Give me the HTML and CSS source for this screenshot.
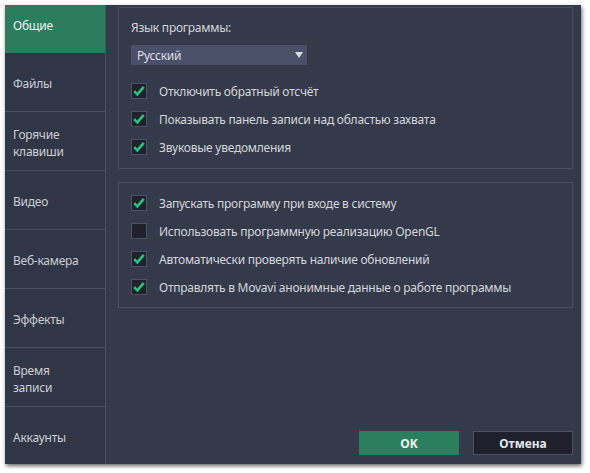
FILE: index.html
```html
<!DOCTYPE html>
<html lang="ru">
<head>
<meta charset="utf-8">
<title>Настройки</title>
<link rel="stylesheet" href="styles.css">
</head>
<body>
<div class="window">
  <nav class="sidebar">
    <div class="nav-item nav-first active">Общие</div>
    <div class="nav-item">Файлы</div>
    <div class="nav-item">Горячие<br>клавиши</div>
    <div class="nav-item">Видео</div>
    <div class="nav-item">Веб-камера</div>
    <div class="nav-item">Эффекты</div>
    <div class="nav-item">Время<br>записи</div>
    <div class="nav-item nav-last">Аккаунты</div>
  </nav>
  <main class="main">
    <section class="group group-lang">
      <div class="label">Язык программы:</div>
      <div class="select">
        <span>Русский</span>
        <svg class="arrow" width="8" height="6" viewBox="0 0 8 6"><path d="M0 0H8L4 6Z" fill="#d9dbe2"/></svg>
      </div>
      <div class="checks">
        <div class="row"><span class="cb checked"><svg viewBox="0 0 16 16" width="16" height="16"><path d="M3.2 8.2L6.3 11.3L12.8 3.8" fill="none" stroke="#27c27b" stroke-width="2.6"/></svg></span><span>Отключить обратный отсчёт</span></div>
        <div class="row"><span class="cb checked"><svg viewBox="0 0 16 16" width="16" height="16"><path d="M3.2 8.2L6.3 11.3L12.8 3.8" fill="none" stroke="#27c27b" stroke-width="2.6"/></svg></span><span>Показывать панель записи над областью захвата</span></div>
        <div class="row"><span class="cb checked"><svg viewBox="0 0 16 16" width="16" height="16"><path d="M3.2 8.2L6.3 11.3L12.8 3.8" fill="none" stroke="#27c27b" stroke-width="2.6"/></svg></span><span>Звуковые уведомления</span></div>
      </div>
    </section>
    <section class="group group-sys">
      <div class="row"><span class="cb checked"><svg viewBox="0 0 16 16" width="16" height="16"><path d="M3.2 8.2L6.3 11.3L12.8 3.8" fill="none" stroke="#27c27b" stroke-width="2.6"/></svg></span><span>Запускать программу при входе в систему</span></div>
      <div class="row"><span class="cb"></span><span>Использовать программную реализацию OpenGL</span></div>
      <div class="row"><span class="cb checked"><svg viewBox="0 0 16 16" width="16" height="16"><path d="M3.2 8.2L6.3 11.3L12.8 3.8" fill="none" stroke="#27c27b" stroke-width="2.6"/></svg></span><span>Автоматически проверять наличие обновлений</span></div>
      <div class="row"><span class="cb checked"><svg viewBox="0 0 16 16" width="16" height="16"><path d="M3.2 8.2L6.3 11.3L12.8 3.8" fill="none" stroke="#27c27b" stroke-width="2.6"/></svg></span><span>Отправлять в Movavi анонимные данные о работе программы</span></div>
    </section>
    <div class="buttons">
      <button class="btn btn-ok">OK</button>
      <button class="btn btn-cancel">Отмена</button>
    </div>
  </main>
</div>
</body>
</html>
```
FILE: styles.css
```css
html, body {
  margin: 0;
  padding: 0;
  background: #ffffff;
}
body {
  font-family: "Noto Sans", "Open Sans", sans-serif;
  font-size: 12px;
  letter-spacing: -0.25px;
  color: #d3d5dc;
}
.window {
  margin: 5px;
  width: 576px;
  height: 459px;
  display: flex;
  background: #353a4a;
  box-shadow: 1px 2px 4px rgba(0, 0, 0, 0.6);
}
.sidebar {
  width: 100px;
  border-right: 1px solid #4a5062;
  background: #313646;
  display: flex;
  flex-direction: column;
}
.nav-item {
  border-bottom: 1px solid #4a5062;
  display: flex;
  align-items: center;
  padding: 5px 0 0 8px;
  box-sizing: border-box;
  height: 59px;
  line-height: 16.5px;
  color: #cbcdd4;
}
.nav-first {
  height: 48px;
  padding: 0 0 4px 8px;
}
.nav-last {
  flex: 1;
  border-bottom: none;
}
.nav-item.active {
  background: #2b7d5d;
  color: #eef2f0;
  border-bottom-color: #2b7d5d;
}
.main {
  flex: 1;
  display: flex;
  flex-direction: column;
  padding: 2px 8px 9px 12px;
}
.group {
  border: 1px solid #4a5062;
  padding: 0 12px;
}
.group-lang {
  height: 162px;
  box-sizing: border-box;
  padding-top: 12px;
}
.group-sys {
  margin-top: 13px;
  padding-top: 6px;
  padding-bottom: 6px;
}
.label {
  line-height: 16px;
  height: 16px;
}
.select {
  margin-top: 9px;
  width: 176px;
  height: 20px;
  background: #4b5069;
  display: flex;
  align-items: center;
  justify-content: space-between;
  padding: 0 4px 0 6px;
  box-sizing: border-box;
  color: #dcdee6;
}
.checks {
  margin-top: 12px;
}
.row {
  height: 28px;
  display: flex;
  align-items: center;
  gap: 12px;
}
.cb {
  width: 16px;
  height: 16px;
  box-sizing: border-box;
  border: 1px solid #4c5264;
  background: #1f222c;
  position: relative;
  flex: none;
}
.cb svg {
  position: absolute;
  left: -1px;
  top: -1px;
}
.buttons {
  margin-top: auto;
  display: flex;
  justify-content: flex-end;
  gap: 14px;
}
.btn {
  width: 100px;
  height: 24px;
  font-family: "Noto Sans", "Open Sans", sans-serif;
  font-size: 12px;
  font-weight: bold;
  border: none;
  padding: 0;
  color: #eef0f4;
}
.btn-ok {
  background: #2c7f5e;
}
.btn-cancel {
  background: #1e212b;
  border: 1px solid #4c5264;
  color: #e2e6f0;
}
```
